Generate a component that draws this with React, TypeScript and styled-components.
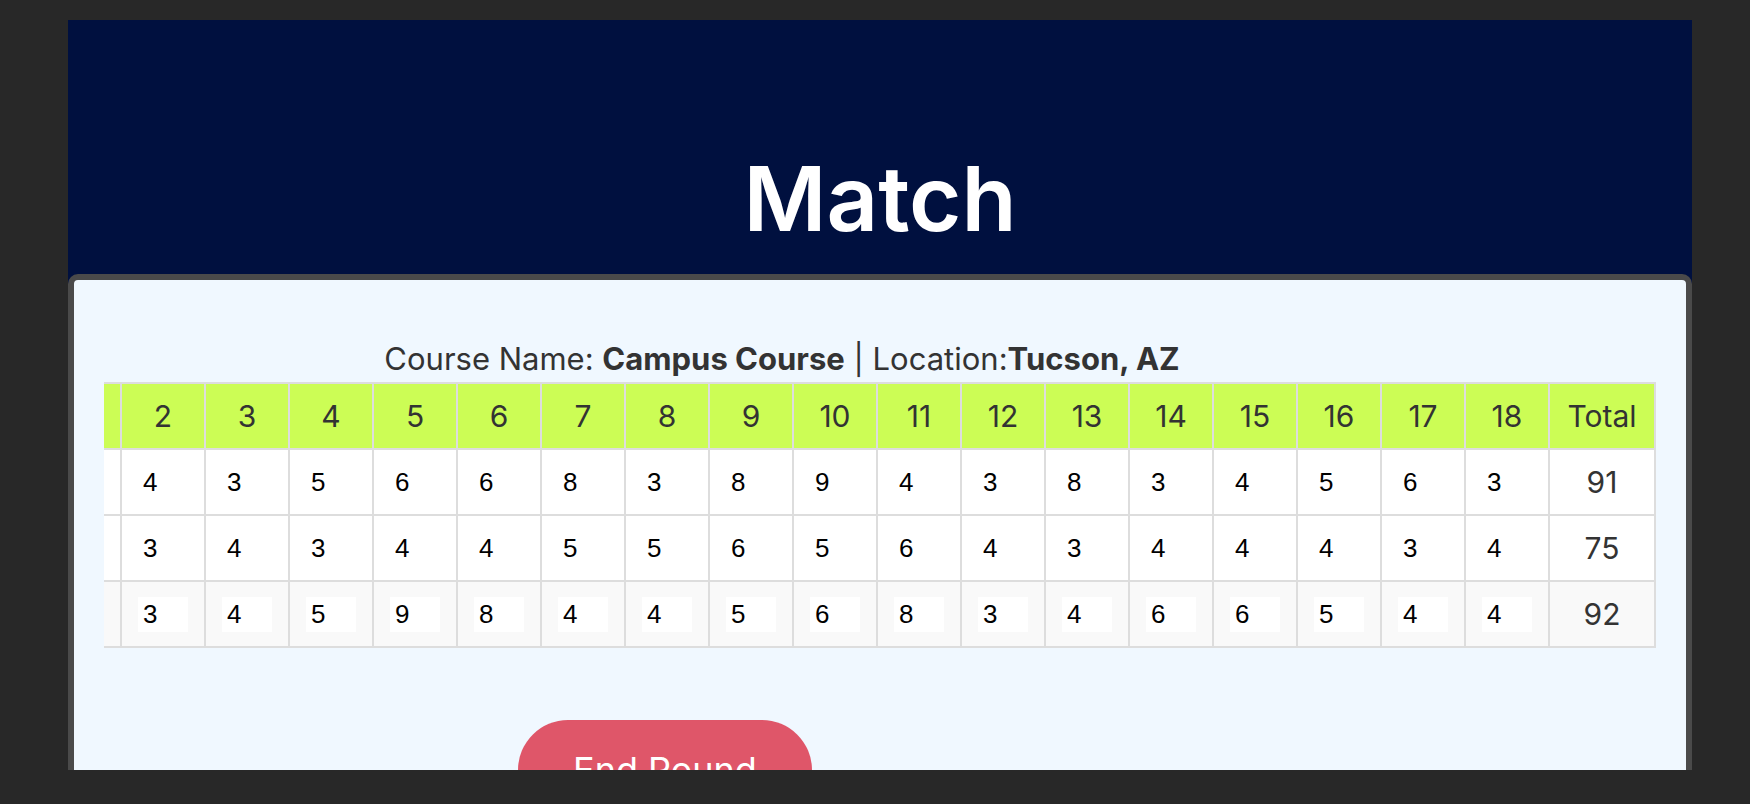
import React, { useLayoutEffect, useRef } from "react";
import styled, { createGlobalStyle } from "styled-components";

const GlobalStyle = createGlobalStyle`
  html, body {
    margin: 0;
    padding: 0;
    height: 100%;
    overflow: hidden;
    background: #282828;
  }
  body {
    font-family: Inter, "Noto Sans", sans-serif;
  }
`;

const Page = styled.div`
  padding: 20px 58px 0 68px;
`;

const Frame = styled.div`
  height: 750px;
  overflow: hidden;
  background: #00103f;
  display: flex;
  flex-direction: column;
`;

const Header = styled.header`
  flex: none;
  height: 254px;
  box-sizing: border-box;
  padding-bottom: 20px;
  display: flex;
  align-items: flex-end;
  justify-content: center;
`;

const Title = styled.h1`
  margin: 0;
  font-family: Inter, sans-serif;
  font-weight: 600;
  font-size: 90px;
  line-height: 110px;
  color: #ffffff;
`;

const Card = styled.section`
  flex: none;
  min-height: 620px;
  border: 6px solid #4a4a4a;
  border-radius: 10px;
  background: #f0f8ff;
  padding: 61px 30px 0;
`;

const ScrollArea = styled.div`
  overflow-x: auto;
  scrollbar-width: none;
  &::-webkit-scrollbar {
    display: none;
  }
`;

const ScrollContent = styled.div`
  width: 1744px;
`;

const CourseInfo = styled.p`
  margin: 0 0 5px;
  text-align: center;
  font-family: Inter, sans-serif;
  font-size: 31px;
  line-height: 36px;
  color: #333333;
  b {
    font-weight: 700;
  }
`;

const Table = styled.table`
  width: 1744px;
  table-layout: fixed;
  border-collapse: collapse;
`;

const HeadCell = styled.th`
  height: 64px;
  padding: 0;
  border: 2px solid #dddddd;
  background: #ccfd55;
  color: #333333;
  font-family: Inter, sans-serif;
  font-weight: 400;
  font-size: 30px;
  text-align: center;
`;

const Cell = styled.td<{ $shade?: boolean }>`
  height: 64px;
  padding: 0 16px;
  border: 2px solid #dddddd;
  background: ${(p) => (p.$shade ? "#f9f9f9" : "#ffffff")};
  vertical-align: middle;
`;

const LabelCell = styled(Cell)`
  font-family: Inter, sans-serif;
  font-size: 24px;
  color: #333333;
`;

const TotalCell = styled(Cell)`
  text-align: center;
  font-family: Inter, sans-serif;
  font-size: 30px;
  color: #333333;
`;

const ScoreInput = styled.input`
  display: block;
  width: 50px;
  height: 35px;
  box-sizing: border-box;
  border: none;
  outline: none;
  padding: 0 5px;
  margin: 0;
  background: #ffffff;
  font-family: "Liberation Sans", Arial, sans-serif;
  font-size: 26px;
  color: #000000;
`;

const EndButton = styled.button`
  margin: 72px 0 0 414px;
  border: none;
  border-radius: 60px;
  background: #df5669;
  color: #ffffff;
  font-family: Inter, sans-serif;
  font-weight: 400;
  font-size: 36px;
  line-height: 44px;
  padding: 28px 55px;
  cursor: pointer;
`;

const holes = Array.from({ length: 18 }, (_, i) => i + 1);

const rows = [
  { label: "Par", scores: [3, 4, 3, 5, 6, 6, 8, 3, 8, 9, 4, 3, 8, 3, 4, 5, 6, 3], editable: false, shade: false },
  { label: "Opponent", scores: [4, 3, 4, 3, 4, 4, 5, 5, 6, 5, 6, 4, 3, 4, 4, 4, 3, 4], editable: false, shade: false },
  { label: "You", scores: [4, 3, 4, 5, 9, 8, 4, 4, 5, 6, 8, 3, 4, 6, 6, 5, 4, 4], editable: true, shade: true },
];

export default function App() {
  const scrollRef = useRef<HTMLDivElement>(null);

  useLayoutEffect(() => {
    const el = scrollRef.current;
    if (el) el.scrollLeft = el.scrollWidth - el.clientWidth;
  }, []);

  return (
    <>
      <GlobalStyle />
      <Page>
        <Frame>
          <Header>
            <Title>Match</Title>
          </Header>
          <Card>
            <ScrollArea ref={scrollRef}>
              <ScrollContent>
                <CourseInfo>
                  Course Name: <b>Campus Course</b> | Location:<b>Tucson, AZ</b>
                </CourseInfo>
                <Table>
                  <colgroup>
                    <col style={{ width: 126 }} />
                    {holes.map((h) => (
                      <col key={h} style={{ width: 84 }} />
                    ))}
                    <col style={{ width: 106 }} />
                  </colgroup>
                  <thead>
                    <tr>
                      <HeadCell>Hole</HeadCell>
                      {holes.map((h) => (
                        <HeadCell key={h}>{h}</HeadCell>
                      ))}
                      <HeadCell>Total</HeadCell>
                    </tr>
                  </thead>
                  <tbody>
                    {rows.map((r) => (
                      <tr key={r.label}>
                        <LabelCell $shade={r.shade}>{r.label}</LabelCell>
                        {r.scores.map((s, i) => (
                          <Cell key={i} $shade={r.shade}>
                            <ScoreInput
                              type="text"
                              defaultValue={String(s)}
                              readOnly={!r.editable}
                              aria-label={`${r.label} hole ${i + 1}`}
                            />
                          </Cell>
                        ))}
                        <TotalCell $shade={r.shade}>
                          {r.scores.reduce((a, b) => a + b, 0)}
                        </TotalCell>
                      </tr>
                    ))}
                  </tbody>
                </Table>
              </ScrollContent>
            </ScrollArea>
            <EndButton>End Round</EndButton>
          </Card>
        </Frame>
      </Page>
    </>
  );
}
